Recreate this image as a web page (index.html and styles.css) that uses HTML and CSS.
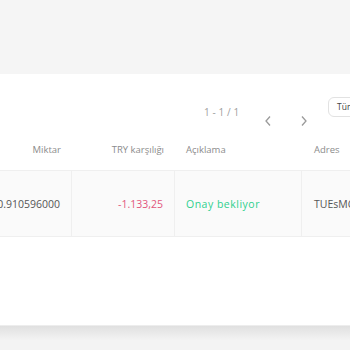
FILE: index.html
```html
<!DOCTYPE html>
<html lang="tr">
<head>
<meta charset="utf-8">
<link rel="stylesheet" href="styles.css">
</head>
<body>
<div class="top"></div>
<div class="panel">
  <div class="toolbar">
    <span class="pages">1 - 1 / 1</span>
    <span class="chev chev-prev">
      <svg width="8" height="12" viewBox="0 0 8 12"><path d="M6 1.5 L2 6 L6 10.5" fill="none" stroke="#9a9a9a" stroke-width="1.3"/></svg>
    </span>
    <span class="chev chev-next">
      <svg width="8" height="12" viewBox="0 0 8 12"><path d="M2 1.5 L6 6 L2 10.5" fill="none" stroke="#9a9a9a" stroke-width="1.3"/></svg>
    </span>
    <span class="btn">Tüm İşlemler</span>
  </div>
  <div class="table">
    <div class="row head">
      <div class="cell c1 right">Miktar</div>
      <div class="cell c2 right">TRY karşılığı</div>
      <div class="cell c3">Açıklama</div>
      <div class="cell c4">Adres</div>
    </div>
    <div class="row body">
      <div class="cell c1 right">0.910596000</div>
      <div class="cell c2 right neg">-1.133,25</div>
      <div class="cell c3 ok">Onay bekliyor</div>
      <div class="cell c4">TUEsMCxkPq7rJ3</div>
    </div>
  </div>
</div>
<div class="bottom"></div>
</body>
</html>
```
FILE: styles.css
```css
html, body {
  margin: 0;
  padding: 0;
}
body {
  width: 350px;
  height: 350px;
  overflow: hidden;
  background: #f5f5f5;
  font-family: "Open Sans", "Liberation Sans", sans-serif;
  color: #555;
}
.top {
  height: 74px;
  background: #f5f5f5;
}
.panel {
  height: 251px;
  background: #fff;
  border-bottom: 1px solid #ededed;
  overflow: hidden;
}
.toolbar {
  height: 54px;
  display: flex;
  align-items: flex-start;
  padding-left: 204px;
  white-space: nowrap;
}
.pages {
  margin-top: 31px;
  font-size: 10px;
  color: #a0a0a0;
  letter-spacing: 0.1px;
  width: 34px;
}
.chev {
  display: block;
  margin-top: 41px;
  line-height: 0;
}
.chev-prev { margin-left: 26px; }
.chev-next { margin-left: 28px; }
.btn {
  margin-top: 23px;
  margin-left: 20px;
  height: 20px;
  line-height: 18px;
  padding: 0 8px;
  border: 1px solid #e2e2e2;
  border-radius: 6px;
  font-size: 8.5px;
  color: #444;
  box-sizing: border-box;
  flex-shrink: 0;
}
.table {
  margin-left: -70px;
  white-space: nowrap;
}
.row {
  display: flex;
}
.head {
  height: 42px;
  align-items: center;
  font-size: 9.5px;
  color: #8c8c8c;
}
.body {
  height: 65px;
  background: #fafafa;
  border-top: 1px solid #efefef;
  border-bottom: 1px solid #efefef;
  font-size: 10.5px;
}
.cell {
  box-sizing: border-box;
  padding: 0 11px;
  flex-shrink: 0;
}
.body .cell {
  display: flex;
  align-items: center;
  height: 100%;
  border-right: 1px solid #efefef;
}
.body .right { justify-content: flex-end; }
.right { text-align: right; }
.c1 { width: 142px; }
.c2 { width: 103px; }
.c3 { width: 127px; }
.c4 { width: 140px; padding-left: 12px; }
.neg { color: #e2577c; }
.ok { color: #2fd08e; letter-spacing: 0.5px; }
.bottom {
  height: 24px;
  background: linear-gradient(#e0e0e0, #f3f3f3 14px, #f3f3f3);
}
```
